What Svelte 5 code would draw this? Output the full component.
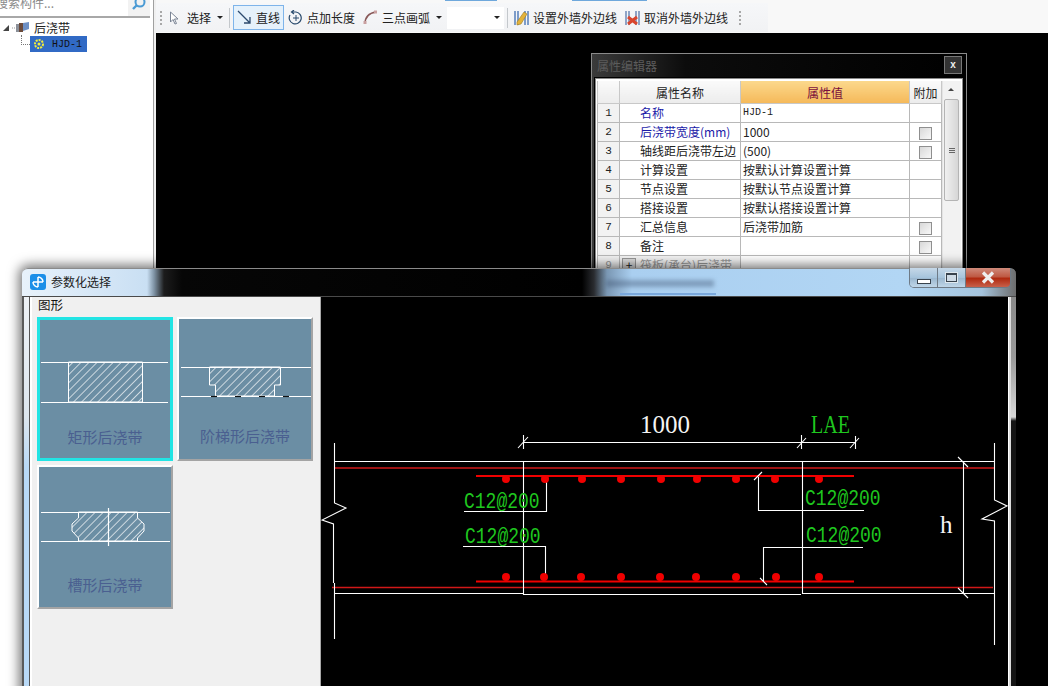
<script>
    // property grid rows
    const rows = [
        { name: "名称", value: "HJD-1", blue: true, check: false, mono: true },
        { name: "后浇带宽度(mm)", value: "1000", blue: true, check: true },
        { name: "轴线距后浇带左边", value: "(500)", check: true },
        { name: "计算设置", value: "按默认计算设置计算" },
        { name: "节点设置", value: "按默认节点设置计算" },
        { name: "搭接设置", value: "按默认搭接设置计算" },
        { name: "汇总信息", value: "后浇带加筋", check: true },
        { name: "备注", value: "", check: true },
    ];

    // thumbnails, drawn in card-local coordinates (136 x 144)
    const shapes = [
        {
            label: "矩形后浇带",
            selected: true,
            y1: 45,
            y2: 85,
            lineEnd: 131,
            section: "M31.5 45 V85 H105.5 V45 Z",
            labelX: 68,
            labelY: 126,
        },
        {
            label: "阶梯形后浇带",
            y1: 50,
            y2: 79,
            lineEnd: 134,
            section: "M32.5 50 V68 H38.5 V79 H97.5 V68 H103.5 V50 Z",
            dashes: [34, 58, 82, 106],
            labelX: 68,
            labelY: 125,
        },
        {
            label: "槽形后浇带",
            y1: 47,
            y2: 76,
            lineEnd: 133,
            section: "M41.5 47 V53 L35 59 V66 L41.5 73 V76 H100.5 V73 L107 66 V59 L100.5 53 V47 Z",
            center: 71.5,
            labelX: 68,
            labelY: 126,
        },
    ];

    const topDots = [506, 545, 582, 621, 661, 697, 736, 775, 819];
    const bottomDots = [506, 544, 581, 621, 660, 696, 736, 776, 819];
    const cadLines = [
        // outer section
        "M334.5 444 V504 L346 509 L322 521 L333.5 525 V584 M334.5 584 V640",
        "M994.5 444 V501 L1007 507 L982 520 L994.5 522 V646",
        "M334 462.5 H994",
        "M334 594.5 H523.5 M523.5 595.5 H801 M802 594.5 H994",
        "M523.5 462 V596 M802.5 462 V595",
        // dimension lines
        "M523 443.5 H855",
        "M523.5 436 V450 M518 449 L528 438",
        "M801.5 436 V450 M797 449 L806 439",
        "M855.5 437 V450 M850 449 L859 439",
        "M963.5 462 V595 M958 458 L968 468 M958 589 L968 599",
        // leaders
        "M546.5 482 V512.5 H464",
        "M463 547.5 H545.5 V578",
        "M758.5 478 V511.5 H864 M754 481 L762 473",
        "M863 548.5 H763.5 V582 M760 579 L767 586",
    ];
    const rebarLabels = [
        [464, 509],
        [465, 544],
        [805, 506],
        [806, 543],
    ];
</script>

<div class="screen">
    <aside class="sidebar">
        <div class="search">
            <span class="search-text">搜索构件...</span>
            <span class="search-btn">
                <svg width="16" height="16" viewBox="0 0 16 16">
                    <circle cx="9" cy="5" r="4.5" fill="none" stroke="#4a9ad4" stroke-width="2" />
                    <path d="M5.5 8.5 L2 12" stroke="#4a9ad4" stroke-width="2.4" />
                </svg>
            </span>
        </div>
        <div class="tree">
            <div class="tree-node">
                <span class="twist"></span>
                <svg width="18" height="14" viewBox="0 0 18 14">
                    <path d="M0 7 H5" stroke="#999" stroke-dasharray="1 1" />
                    <rect x="4" y="3" width="5" height="8" fill="#8a8f98" />
                    <rect x="7" y="2" width="4" height="9" fill="#6b4a3a" />
                    <path d="M11 2 L17 1 V8 L11 10 Z" fill="#6d8fc4" />
                </svg>
                <span class="tree-label">后浇带</span>
            </div>
            <div class="tree-child">
                <span class="elbow"></span>
                <span class="tree-selected">
                    <svg width="10" height="10" viewBox="0 0 10 10">
                        <circle cx="5" cy="5" r="4" fill="none" stroke="#f4ee3a" stroke-width="2" stroke-dasharray="2 1" />
                        <circle cx="5" cy="5" r="1.5" fill="#f4ee3a" />
                    </svg>
                    <span class="mono">HJD-1</span>
                </span>
            </div>
        </div>
    </aside>

    <main class="main">
        <div class="tabs-strip">
            <span class="tab-mark first"></span>
            <span class="tab-mark second"></span>
        </div>
        <div class="toolbar-row">
            <div class="toolbar">
                <span class="grip"></span>
                <span class="tool select">
                    <svg width="10" height="14" viewBox="0 0 10 14">
                        <path d="M1.5 1 V11 L4 8.5 L6 13 L7.5 12.5 L5.5 8 H9 Z" fill="#fff" stroke="#7a8494" />
                    </svg>
                    <span>选择</span>
                </span>
                <span class="caret"></span>
                <span class="sep"></span>
                <span class="tool active">
                    <svg width="15" height="15" viewBox="0 0 15 15">
                        <path d="M1 1 L13 13 M13 7 V13 H7" fill="none" stroke="#2c4a6e" stroke-width="1.3" />
                    </svg>
                    <span>直线</span>
                </span>
                <span class="tool length">
                    <svg width="16" height="16" viewBox="0 0 16 16">
                        <path d="M2 5 A6 6 0 1 0 8 2 H4 M6 0 L3.5 2 L6 4" fill="none" stroke="#2a4b6d" stroke-width="1.2" />
                        <path d="M8 5 V11 M5 8 H11" stroke="#2a4b6d" />
                    </svg>
                    <span>点加长度</span>
                </span>
                <span class="tool arc">
                    <svg width="15" height="15" viewBox="0 0 15 15">
                        <path d="M2 14 C2 7 6 3 13 2" fill="none" stroke="#8a5a5a" stroke-width="1.6" />
                        <rect x="0.5" y="11" width="3" height="3" fill="#c9a0a0" />
                        <rect x="11" y="0.5" width="3" height="3" fill="#c9a0a0" />
                    </svg>
                    <span>三点画弧</span>
                </span>
                <span class="caret"></span>
                <span class="combo"><span class="caret"></span></span>
                <span class="sep after-combo"></span>
                <span class="tool wall first-wall">
                    <svg width="15" height="17" viewBox="0 0 15 17">
                        <path d="M1 2 V16 M4 2 V16 M11 2 V16 M14 2 V16" stroke="#7d9cc9" stroke-width="2" />
                        <path d="M3 13 L10 3 L13 5 L7 15 L3 16 Z" fill="#e3b23a" stroke="#9a7a22" stroke-width="0.6" />
                    </svg>
                    <span>设置外墙外边线</span>
                </span>
                <span class="tool wall">
                    <svg width="15" height="17" viewBox="0 0 15 17">
                        <path d="M1 2 V16 M4 2 V16 M11 2 V16 M14 2 V16" stroke="#8ea3c6" stroke-width="2" />
                        <path d="M3 8 L12 15 M12 8 L3 15" stroke="#d8452e" stroke-width="3" />
                    </svg>
                    <span>取消外墙外边线</span>
                </span>
                <span class="grip end"></span>
            </div>
        </div>
        <div class="canvas"></div>
    </main>

    <!-- floating property window -->
    <section class="props">
        <header class="props-title">
            <span>属性编辑器</span>
            <span class="props-close">x</span>
        </header>
        <div class="props-body">
            <table class="grid">
                <colgroup>
                    <col class="c-no" />
                    <col class="c-name" />
                    <col class="c-value" />
                    <col class="c-add" />
                </colgroup>
                <thead>
                    <tr>
                        <th></th>
                        <th>属性名称</th>
                        <th class="hot">属性值</th>
                        <th>附加</th>
                    </tr>
                </thead>
                <tbody>
                    {#each rows as row, i}
                        <tr>
                            <td class="no">{i + 1}</td>
                            <td class="name" class:blue={row.blue}>{row.name}</td>
                            <td class="value" class:mono={row.mono}>{row.value}</td>
                            <td class="add">
                                {#if row.check}<span class="check"></span>{/if}
                            </td>
                        </tr>
                    {/each}
                    <tr class="faded">
                        <td class="no">9</td>
                        <td class="name group"><span class="plus">+</span>筏板(承台)后浇带</td>
                        <td class="value"></td>
                        <td class="add"></td>
                    </tr>
                </tbody>
            </table>
            <div class="scroll">
                <span class="scroll-up"></span>
                <span class="scroll-thumb"><span class="scroll-grip"></span></span>
            </div>
        </div>
    </section>

    <!-- parametric dialog -->
    <section class="dialog">
        <header class="dialog-title">
            <span class="app-icon">
                <svg width="16" height="16" viewBox="0 0 16 16">
                    <rect width="16" height="16" rx="3" fill="#1c8fe8" />
                    <path d="M8 3 V13 M3 8 H13 M8 3 A5 5 0 0 1 13 8 M3 8 A5 5 0 0 0 8 13" fill="none" stroke="#fff" stroke-width="1.5" />
                </svg>
            </span>
            <span class="dialog-name">参数化选择</span>
            <span class="ghost-text"></span>
            <span class="ghost-line"></span>
            <span class="win-btns">
                <span class="win-btn"><i class="min"></i></span>
                <span class="win-btn"><i class="max"></i></span>
                <span class="win-btn close">
                    <svg width="16" height="13" viewBox="0 0 16 13">
                        <path d="M3 1.5 L13 11.5 M13 1.5 L3 11.5" stroke="#eee" stroke-width="3.2" />
                    </svg>
                </span>
            </span>
        </header>
        <div class="dialog-body">
            <div class="frame-left"></div>
            <div class="panel">
                <div class="panel-label">图形</div>
                <div class="cards">
                    {#each shapes as shape, i}
                        <div class="card" class:selected={shape.selected}>
                            <svg width="136" height="144" viewBox="0 0 136 144">
                                <defs>
                                    <pattern id="hatch{i}" width="5.7" height="5.7" patternUnits="userSpaceOnUse" patternTransform="rotate(45)">
                                        <path d="M0 0 V5.7" stroke="#fff" stroke-width="1.3" />
                                    </pattern>
                                </defs>
                                <path d={shape.section} fill="url(#hatch{i})" stroke="#fff" />
                                <path d="M4 {shape.y1 + 0.5} H{shape.lineEnd} M4 {shape.y2 + 0.5} H{shape.lineEnd}" stroke="#fff" stroke-width="1.2" />
                                {#if shape.dashes}
                                    {#each shape.dashes as x}
                                        <path d="M{x} 79.5 H{x + 6}" stroke="#111" stroke-width="1.2" />
                                    {/each}
                                {/if}
                                {#if shape.center}
                                    <path d="M{shape.center} 43 V81" stroke="#fff" stroke-width="1.2" />
                                {/if}
                                <text class="card-label" x={shape.labelX} y={shape.labelY} text-anchor="middle">{shape.label}</text>
                            </svg>
                        </div>
                    {/each}
                </div>
            </div>
            <div class="drawing">
                <svg width="687" height="388" viewBox="321 298 687 388">
                    <path d="M334 469 H995 M332 588.5 H993" stroke="#d01818" stroke-width="1.4" fill="none" />
                    <path d="M476 477 H854 M476 582.5 H854" stroke="#f00000" stroke-width="2.2" fill="none" />
                    {#each cadLines as line}
                        <path d={line} stroke="#fff" stroke-width="1.1" fill="none" />
                    {/each}
                    {#each topDots as x}
                        <circle cx={x} cy="480" r="4" fill="#f00000" />
                    {/each}
                    {#each bottomDots as x}
                        <circle cx={x} cy="578" r="4" fill="#f00000" />
                    {/each}
                    {#each rebarLabels as [x, y]}
                        <text class="cad-mono" transform="translate({x} {y}) scale(1 1.18)">C12@200</text>
                    {/each}
                    <text class="cad-serif white" x="640" y="434">1000</text>
                    <text class="cad-serif green" transform="translate(811 434) scale(0.8 1)">LAE</text>
                    <text class="cad-serif white" x="940" y="534">h</text>
                </svg>
            </div>
            <div class="frame-right"></div>
        </div>
    </section>
</div>

<style>
    :global(body) {
        margin: 0;
    }

    .screen {
        position: relative;
        display: flex;
        width: 1048px;
        height: 686px;
        overflow: hidden;
        background: #fff;
        font-family: "Noto Sans CJK SC", "Liberation Sans", sans-serif;
        font-size: 12px;
        color: #222;
    }

    .mono {
        font-family: "Liberation Mono", monospace;
        font-size: 10px;
    }

    /* left tree */
    .sidebar {
        width: 153px;
        flex: none;
        border-right: 1px solid #a0a0a0;
        box-sizing: content-box;
        background: #fff;
    }

    .search {
        display: flex;
        justify-content: space-between;
        height: 16px;
        overflow: hidden;
        border-bottom: 2px solid #a8a8a8;
        margin-right: 3px;
    }

    .search-text {
        margin: -6px 0 0 -4px;
        line-height: 18px;
        color: #8a8a8a;
    }

    .search-btn {
        display: flex;
        align-items: flex-start;
        justify-content: center;
        width: 22px;
        margin-top: -3px;
        background: #f2f2f2;
    }

    .tree {
        padding-top: 1px;
    }

    .tree-node {
        display: flex;
        align-items: center;
        height: 17px;
    }

    .twist {
        width: 0;
        height: 0;
        margin: 0 3px 0 3px;
        border-left: 6px solid transparent;
        border-bottom: 6px solid #444;
    }

    .tree-label {
        margin-left: 4px;
        line-height: 17px;
    }

    .tree-child {
        display: flex;
        align-items: center;
        height: 16px;
        padding-left: 21px;
    }

    .elbow {
        width: 9px;
        height: 10px;
        margin-top: -9px;
        border-left: 1px dotted #777;
        border-bottom: 1px dotted #777;
        box-sizing: border-box;
    }

    .tree-selected {
        display: flex;
        align-items: center;
        gap: 8px;
        width: 53px;
        height: 16px;
        padding-left: 4px;
        background: #316ac5;
        color: #111;
    }

    /* main area */
    .main {
        display: flex;
        flex: 1;
        flex-direction: column;
        border-left: 2px solid #f0f0f0;
        background: #f8f8f8;
    }

    .tabs-strip {
        position: relative;
        height: 3px;
        flex: none;
        background: #f8f8f8;
    }

    .tab-mark {
        position: absolute;
        top: 0;
        height: 1px;
        background: #6fa8dc;
    }

    .tab-mark.first {
        left: 289px;
        width: 52px;
    }

    .tab-mark.second {
        left: 416px;
        width: 75px;
    }

    .toolbar-row {
        height: 30px;
        flex: none;
    }

    .toolbar {
        display: flex;
        align-items: center;
        width: 612px;
        height: 29px;
        background: linear-gradient(#f6f7f9, #f1f2f4);
    }

    .grip {
        width: 2px;
        height: 14px;
        margin-left: 4px;
        background: repeating-linear-gradient(#a8a8a8 0 2px, transparent 2px 4px);
    }

    .grip.end {
        margin-left: 11px;
    }

    .tool {
        display: flex;
        align-items: center;
        gap: 4px;
        height: 23px;
        white-space: nowrap;
    }

    .select {
        gap: 8px;
        margin-left: 7px;
    }

    .active {
        width: 43px;
        margin: 0 4px 0 3px;
        padding: 0 3px;
        border: 1px solid #7eb4ea;
        background: #e5f1fb;
        justify-content: center;
    }

    .length {
        gap: 3px;
    }

    .arc {
        margin-left: 8px;
    }

    .wall {
        margin-left: 8px;
    }

    .first-wall {
        margin-left: 6px;
    }

    .caret {
        width: 0;
        height: 0;
        border: 3px solid transparent;
        border-top: 3px solid #222;
        border-bottom: 0;
        margin-left: 6px;
    }

    .combo {
        display: flex;
        align-items: center;
        justify-content: flex-end;
        width: 53px;
        height: 22px;
        margin-left: 5px;
        padding-right: 4px;
        background: #fff;
    }

    .sep {
        width: 1px;
        height: 20px;
        margin-left: 6px;
        background: #c4c8cc;
    }

    .sep.after-combo {
        margin-left: 3px;
    }

    .canvas {
        flex: 1;
        background: #000;
    }

    /* property window */
    .props {
        position: absolute;
        left: 591px;
        top: 53px;
        width: 376px;
        height: 240px;
        box-sizing: border-box;
        border: 1px solid #8a8a8a;
        background: linear-gradient(90deg, #3a3a3a, #0c0c0c 25%, #000);
    }

    .props-title {
        display: flex;
        justify-content: space-between;
        align-items: center;
        height: 22px;
        padding: 0 4px 0 5px;
        color: #5c5c5c;
        font-size: 12px;
    }

    .props-close {
        width: 16px;
        height: 16px;
        border: 1px solid #777;
        background: #333;
        color: #eee;
        font: bold 10px/15px "Liberation Sans", sans-serif;
        text-align: center;
    }

    .props-body {
        display: flex;
        margin: 2px 3px 0 3px;
        padding: 2px 1px 0 1px;
        border: 1px solid #888;
        border-bottom: 0;
        height: 191px;
        background: #fff;
        outline: 1px solid #000;
    }

    .grid {
        width: 344px;
        flex: none;
        table-layout: fixed;
        border-collapse: collapse;
        height: 0;
        font-size: 12px;
    }

    .c-no {
        width: 22px;
    }

    .c-name {
        width: 121px;
    }

    .c-value {
        width: 169px;
    }

    .c-add {
        width: 32px;
    }

    .grid th {
        height: 22px;
        padding: 0;
        border: 1px solid #c8c8c8;
        border-top: 0;
        background: linear-gradient(#fafafa, #ececec);
        font-weight: normal;
    }

    .grid th.hot {
        background: linear-gradient(#fbd88c, #f5b95a);
        color: #7a0f3c;
    }

    .grid td {
        height: 18px;
        padding: 0;
        border: 1px solid #b8b8b8;
        line-height: 18px;
        white-space: nowrap;
        overflow: hidden;
    }

    .no {
        background: #f2f2f2;
        text-align: center;
        font-family: "Liberation Mono", monospace;
        font-size: 11px;
    }

    .name {
        padding-left: 20px !important;
    }

    .name.blue {
        color: #1a1aa8;
    }

    .value {
        padding-left: 2px !important;
    }

    .value.mono {
        font-size: 10px;
    }

    .add {
        text-align: center;
    }

    .check {
        display: block;
        width: 11px;
        height: 11px;
        margin: 2px auto 0;
        border: 1px solid #8f8f8f;
        background: linear-gradient(135deg, #d8d8d8, #f8f8f8);
    }

    .faded td {
        color: #999;
    }

    .name.group {
        padding-left: 2px !important;
        background: #f4f4f4;
    }

    .plus {
        display: inline-block;
        width: 12px;
        height: 12px;
        margin-right: 4px;
        vertical-align: top;
        margin-top: 2px;
        border: 1px solid #999;
        background: #ddd;
        color: #222;
        line-height: 11px;
        text-align: center;
    }

    .scroll {
        position: relative;
        flex: 1;
        background: #f2f2f2;
        border-left: 1px solid #e4e4e4;
    }

    .scroll-up {
        position: absolute;
        left: 5px;
        top: 7px;
        border: 3px solid transparent;
        border-bottom: 3px solid #444;
        border-top: 0;
    }

    .scroll-thumb {
        position: absolute;
        left: 1px;
        top: 18px;
        display: flex;
        align-items: center;
        justify-content: center;
        width: 13px;
        height: 100px;
        border: 1px solid #b4b4b4;
        border-radius: 2px;
        background: linear-gradient(90deg, #f0f0f0, #d6d6d6);
    }

    .scroll-grip {
        width: 6px;
        height: 5px;
        background: repeating-linear-gradient(#666 0 1px, transparent 1px 2px);
    }

    /* dialog */
    .dialog {
        position: absolute;
        left: 22px;
        top: 268px;
        display: flex;
        flex-direction: column;
        width: 994px;
        height: 440px;
        border-radius: 6px 6px 0 0;
        box-shadow: 0 0 12px 3px rgba(0, 0, 0, 0.55);
    }

    .dialog-title {
        position: relative;
        display: flex;
        align-items: center;
        flex: none;
        height: 28px;
        padding-bottom: 2px;
        border-top: 1px solid #8a8a8a;
        box-sizing: border-box;
        border-radius: 6px 6px 0 0;
        background: linear-gradient(
            90deg,
            #e8f2fb 0,
            #c9dff3 125px,
            #8094a6 132px,
            #1c1c1c 142px,
            #060606 160px,
            #000 560px,
            #2a2c30 572px,
            #7a97b3 585px,
            #aacff0 610px,
            #b2d6f4 880px,
            #a5c4dd 960px,
            #6c6c6c 994px
        );
    }

    .app-icon {
        display: flex;
        margin-left: 8px;
    }

    .dialog-name {
        margin-left: 5px;
    }

    .ghost-text {
        position: absolute;
        left: 584px;
        top: 11px;
        width: 108px;
        height: 7px;
        background: rgba(60, 80, 110, 0.4);
        filter: blur(2px);
    }

    .ghost-line {
        position: absolute;
        left: 598px;
        top: 24px;
        width: 96px;
        height: 2px;
        background: #7aa8dc;
        filter: blur(0.5px);
    }

    .win-btns {
        position: absolute;
        right: 5px;
        top: -1px;
        display: flex;
        height: 19px;
        border: 1px solid #6e7a86;
        border-top: 0;
        border-radius: 0 0 5px 5px;
        overflow: hidden;
    }

    .win-btn {
        display: flex;
        align-items: center;
        justify-content: center;
        width: 27px;
        background: linear-gradient(#c6d8e8, #a6c4dc 50%, #9cb8d0 55%, #c0d6e8);
        border-right: 1px solid #6e7a86;
    }

    .win-btn .min {
        width: 12px;
        height: 3px;
        margin-top: 7px;
        border: 1px solid #39434d;
        background: #fff;
    }

    .win-btn .max {
        width: 9px;
        height: 6px;
        border: 1px solid #39434d;
        border-top-width: 2px;
        background: #cfdbe6;
        outline: 1px solid #dfe8ef;
    }

    .win-btn.close {
        width: 44px;
        border-right: 0;
        background: linear-gradient(#cf8a7a, #bf5a44 45%, #b02a10 55%, #c8604a);
    }

    .dialog-body {
        display: flex;
        flex: 1;
        min-height: 0;
        border-top: 1px solid #4a4a4a;
    }

    .frame-left {
        flex: none;
        width: 5px;
        margin-right: 1px;
        border-left: 2px solid #5a5a5a;
        border-right: 1px solid #555;
        background: linear-gradient(#eef2f6, #dde6ee 120px, #b9d9f6 170px);
    }

    .panel {
        flex: none;
        width: 290px;
        box-sizing: border-box;
        padding-left: 5px;
        border-left: 1px solid #fff;
        border-right: 1px solid #a8a8a8;
        background: #f0f0f0;
    }

    .panel-label {
        height: 20px;
        margin-left: 1px;
        line-height: 16px;
        font-size: 12.5px;
        color: #111;
    }

    .cards {
        display: grid;
        grid-template-columns: 136px 136px;
        gap: 4px;
    }

    .card {
        height: 144px;
        box-sizing: border-box;
        border: 2px solid;
        border-color: #fff #a4a4a4 #a4a4a4 #fff;
        background: #6b8ea4;
        overflow: hidden;
    }

    .card svg {
        display: block;
        margin: -2px;
    }

    .card.selected {
        border: 3px solid #22e4e4;
    }

    .card.selected svg {
        margin: -3px;
    }

    .card-label {
        font-size: 15px;
        fill: #4a5f90;
    }

    .drawing {
        flex: none;
        width: 687px;
        background: #000;
        border-right: 1px solid #fff;
    }

    .drawing svg {
        display: block;
    }

    .frame-right {
        flex: 1;
        border-left: 2px solid #dcdcdc;
        background: linear-gradient(#8a8a8a, #9a9a9a 60px, #d8d8d8 120px, #151515 124px);
    }

    .cad-mono {
        font-family: "Liberation Mono", monospace;
        font-size: 18px;
        fill: #1fc71f;
    }

    .cad-serif {
        font-family: "Liberation Serif", serif;
        font-size: 25px;
    }

    .white {
        fill: #f4f4f4;
    }

    .green {
        fill: #1fc71f;
    }
</style>
